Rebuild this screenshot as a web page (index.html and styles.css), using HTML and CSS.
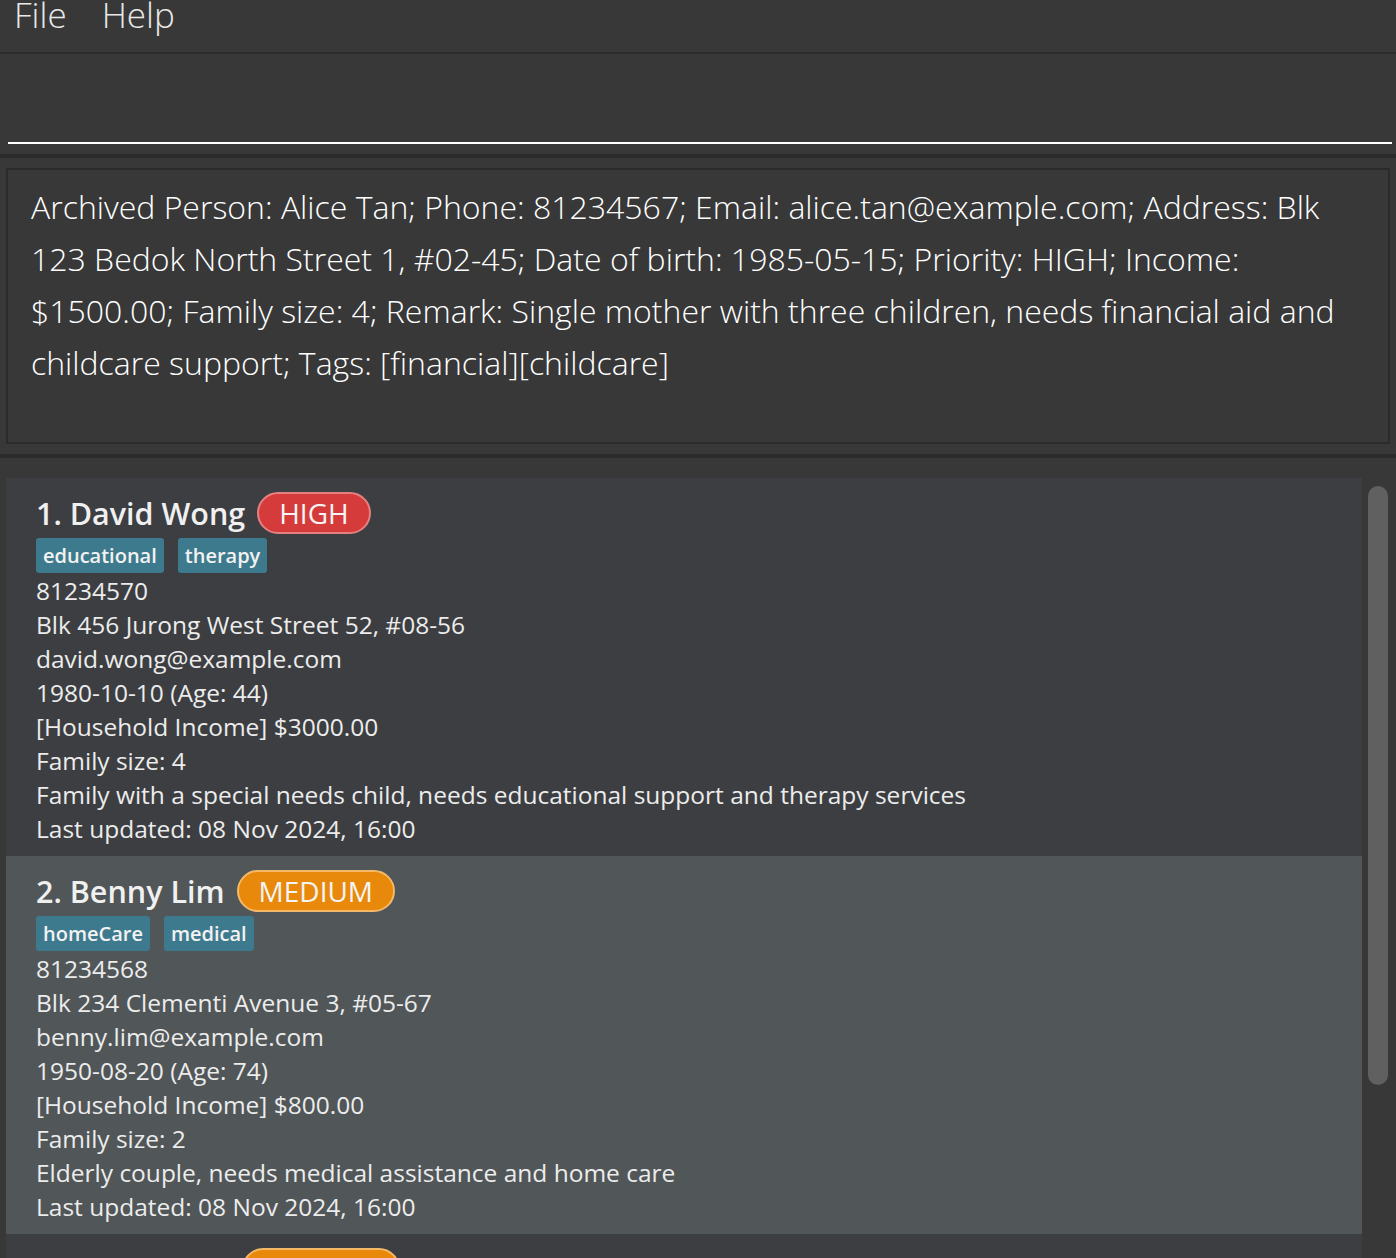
FILE: index.html
```html
<!DOCTYPE html>
<html>
<head>
<meta charset="utf-8">
<link rel="stylesheet" href="styles.css">
</head>
<body>
<div class="app">
  <div class="menubar"><span class="menu-item">File</span><span class="menu-item">Help</span></div>
  <div class="command"><div class="cmd-input"></div></div>
  <div class="result-pane">
    <div class="result-box">Archived Person: Alice Tan; Phone: 81234567; Email: alice.tan@example.com; Address: Blk 123 Bedok North Street 1, #02-45; Date of birth: 1985-05-15; Priority: HIGH; Income: $1500.00; Family size: 4; Remark: Single mother with three children, needs financial aid and childcare support; Tags: [financial][childcare]</div>
  </div>
  <div class="list-pane">
    <div class="list">
      <div class="card">
        <div class="name-row"><span class="name">1. David Wong</span><span class="badge high">HIGH</span></div>
        <div class="tags"><span class="tag">educational</span><span class="tag">therapy</span></div>
        <div class="line">81234570</div>
        <div class="line">Blk 456 Jurong West Street 52, #08-56</div>
        <div class="line">david.wong@example.com</div>
        <div class="line">1980-10-10 (Age: 44)</div>
        <div class="line">[Household Income] $3000.00</div>
        <div class="line">Family size: 4</div>
        <div class="line">Family with a special needs child, needs educational support and therapy services</div>
        <div class="line">Last updated: 08 Nov 2024, 16:00</div>
      </div>
      <div class="card alt">
        <div class="name-row"><span class="name">2. Benny Lim</span><span class="badge medium">MEDIUM</span></div>
        <div class="tags"><span class="tag">homeCare</span><span class="tag">medical</span></div>
        <div class="line">81234568</div>
        <div class="line">Blk 234 Clementi Avenue 3, #05-67</div>
        <div class="line">benny.lim@example.com</div>
        <div class="line">1950-08-20 (Age: 74)</div>
        <div class="line">[Household Income] $800.00</div>
        <div class="line">Family size: 2</div>
        <div class="line">Elderly couple, needs medical assistance and home care</div>
        <div class="line">Last updated: 08 Nov 2024, 16:00</div>
      </div>
      <div class="card">
        <div class="name-row"><span class="name">3. Rachel Sim</span><span class="badge medium">MEDIUM</span></div>
        <div class="tags"><span class="tag">elderly</span></div>
        <div class="line">81234569</div>
      </div>
    </div>
    <div class="scrollbar"><div class="thumb"></div></div>
  </div>
</div>
</body>
</html>
```
FILE: styles.css
```css
html, body {
  margin: 0;
  padding: 0;
  background: #383838;
  overflow: hidden;
}
.app {
  width: 1396px;
  height: 1258px;
  display: flex;
  flex-direction: column;
  font-family: "Open Sans", "Noto Sans", sans-serif;
  color: #f0f0f0;
}
.menubar {
  height: 52px;
  flex: none;
  border-bottom: 2px solid #2b2b2b;
  display: flex;
  gap: 35px;
  padding-left: 14px;
  overflow: hidden;
}
.menu-item {
  font-weight: 300;
  font-size: 35px;
  line-height: 32px;
  margin-top: -1px;
  color: #e8e8e8;
}
.command {
  height: 104px;
  flex: none;
  box-sizing: border-box;
  padding: 0 4px 10px 8px;
  border-bottom: 4px solid #2b2b2b;
}
.cmd-input {
  height: 88px;
  border-bottom: 2px solid #ffffff;
}
.result-pane {
  height: 300px;
  flex: none;
  box-sizing: border-box;
  padding: 10px 6px 10px 6px;
  border-bottom: 4px solid #2b2b2b;
}
.result-box {
  height: 100%;
  box-sizing: border-box;
  border: 2px solid #2b2b2b;
  padding: 11px 30px 0 23px;
  font-weight: 300;
  font-size: 32px;
  line-height: 52px;
  color: #ffffff;
}
.list-pane {
  flex: 1;
  min-height: 0;
  display: flex;
  padding-top: 20px;
  overflow: hidden;
}
.list {
  width: 1356px;
  margin-left: 6px;
}
.card {
  background: #3c3e41;
  padding: 12px 0 10px 30px;
}
.card.alt {
  background: #515658;
}
.name-row {
  height: 46px;
  display: flex;
  align-items: center;
  gap: 12px;
}
.name {
  font-size: 30.5px;
  font-weight: 600;
  color: #f0f0f0;
}
.badge {
  height: 42px;
  box-sizing: border-box;
  border-radius: 21px;
  padding: 0 20px;
  display: flex;
  align-items: center;
  font-size: 28px;
  font-weight: 500;
  color: #f4f4f4;
}
.badge.high {
  background: #d63b3b;
  border: 2px solid #e58080;
}
.badge.medium {
  background: #e8890b;
  border: 2px solid #f4b867;
}
.tags {
  display: flex;
  gap: 14px;
  margin-top: 2px;
  margin-bottom: 1px;
}
.tag {
  height: 35px;
  box-sizing: border-box;
  background: #3e7a8e;
  border-radius: 3px;
  padding: 0 7px;
  display: flex;
  align-items: center;
  font-size: 20px;
  font-weight: 600;
  color: #f2f2f2;
}
.line {
  height: 34px;
  line-height: 34px;
  font-size: 24.5px;
  color: #ececec;
  white-space: nowrap;
}
.scrollbar {
  width: 20px;
  margin-left: 6px;
  padding-top: 8px;
}
.thumb {
  height: 599px;
  background: #606060;
  border-radius: 10px;
}
```
